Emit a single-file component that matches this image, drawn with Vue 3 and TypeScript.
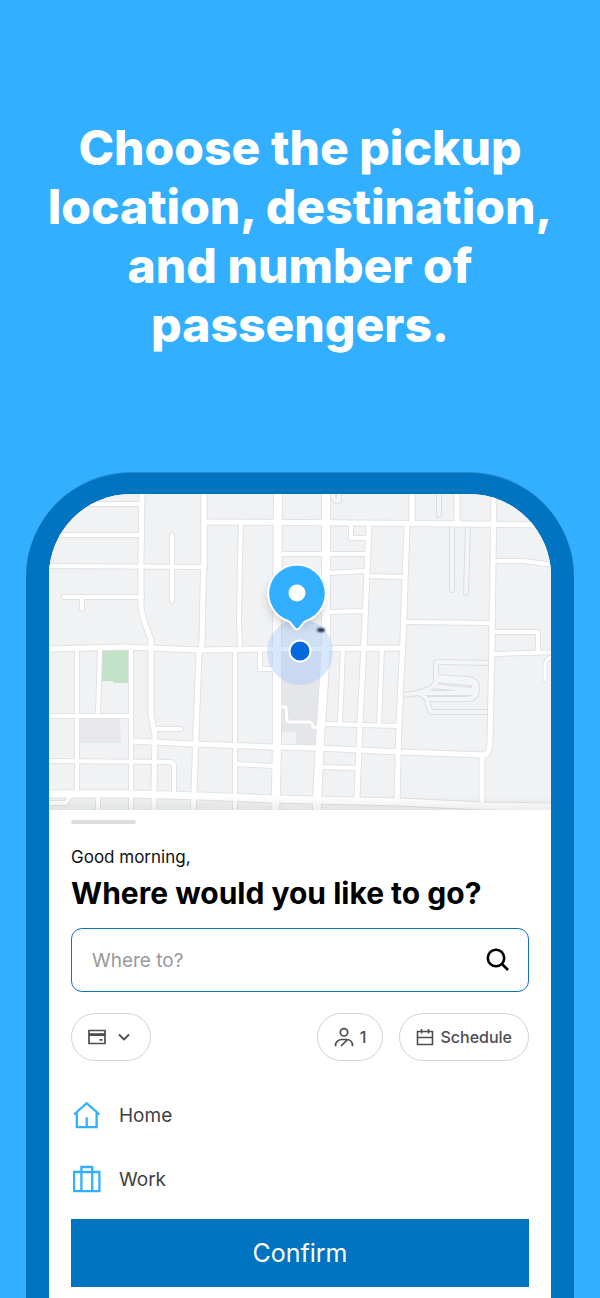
<script setup lang="ts">
import { ref } from 'vue'

interface Road {
  d: string
  w: number
}

const destination = ref('')

const places = [
  { name: 'Home', icon: 'M1 13.5 13.7 2.2 26.5 13.5M3.8 11v15.2h19.8V11M13.7 16.3v9.5' },
  { name: 'Work', icon: 'M1 7h25.4v19.2H1zM8.4 26V2h10.8v24' },
]

const roads: Road[] = [
  { d: 'M90 504H142M49 535H142M49 566 205 567M64 597H142M82 597V609', w: 4 },
  { d: 'M142 490 141 560V607L143 618 151 640V715L155 735 154 790V815', w: 5 },
  { d: 'M172 535V601', w: 4 },
  { d: 'M204 490V560L203 590 202 643 199 653 197 707 194 790 193 815', w: 5 },
  { d: 'M204 522 370 523 555 525', w: 5 },
  { d: 'M241 523 240 560 239 620 240 648M235 650V815', w: 4 },
  { d: 'M280 554H366M328 573 366 571M328 612 365 611', w: 4 },
  { d: 'M369 524 367 573 364 645 360 723 357 799', w: 5 },
  { d: 'M351 525V538H367M368 576 405 577M407 622 491 623', w: 4 },
  { d: 'M407 525 403 640 402 660 399 723 397 802', w: 5 },
  { d: 'M412 490V523M457 490V523', w: 5 },
  { d: 'M494 490 492 640 490 742Q490 755 482 755L482 804', w: 5 },
  { d: 'M493 561H523L555 565M493 632H538V652M493 654 555 652', w: 4 },
  { d: 'M553 657Q545 658 545 667V680', w: 3 },
  { d: 'M49 649 123 647 200 650 277 649 402 648', w: 5 },
  { d: 'M77 648V794M100 648 98 716M131 648V815M49 716H131', w: 4 },
  { d: 'M49 761 170 762Q174 762 174 766V791M157 729H181', w: 4 },
  { d: 'M133 741 193 744 273 747 318 748 400 752 486 755', w: 5 },
  { d: 'M236 764 275 766M260 650V669H276', w: 4 },
  { d: 'M278 707H286L287 720Q287 722 290 722H310Q312 722 313 727L319 728', w: 3 },
  { d: 'M343 648 340 724M382 648 379 724M324 724 399 726M321 767 358 768', w: 4 },
  { d: 'M49 803H66L71 795M98 796V815', w: 4 },
  { d: 'M278 490 277 640V740L276 790 275 815', w: 8 },
  { d: 'M326 490V640L324 680 320 740 317 800V815', w: 8 },
  { d: 'M49 794 133 794 200 796 273 799 400 802 483 806 555 807', w: 7 },
]

const lanes: string[] = [
  'M439 490V515M452 527V590M468 527 466 593',
  'M333 494V497Q335 502 339 501V490',
  'M403 695 412 694Q420 693 433 687L436 682V665Q436 662 439 662L490 663',
  'M420 694Q428 697 428 704L430 710Q430 712 433 712H490',
  'M436 677 468 679Q477 680 477 689 477 699 466 699H430',
  'M434 686 470 690Q474 690 474 688V685Q474 683 470 683L437 680M425 693H474',
]
</script>

<template>
  <main class="page">
    <h1 class="headline">Choose the pickup location, destination, and number of passengers.</h1>

    <section class="phone">
      <div class="screen">
        <svg class="map" viewBox="49 494 502 316" role="img" aria-label="Map with pickup location">
          <defs>
            <filter id="soft" x="-40%" y="-40%" width="180%" height="180%">
              <feGaussianBlur stdDeviation="4" />
            </filter>
            <filter id="smudge" x="-50%" y="-100%" width="200%" height="300%">
              <feGaussianBlur stdDeviation="1" />
            </filter>
            <linearGradient id="edge" x1="0" y1="0" x2="0" y2="1">
              <stop offset="0" stop-color="#555" stop-opacity="0" />
              <stop offset="1" stop-color="#555" stop-opacity="0.1" />
            </linearGradient>
          </defs>
          <rect x="49" y="494" width="502" height="316" fill="#f1f2f3" />
          <path d="M79 719h41l1 24H79z" fill="#e8e8eb" />
          <path d="M281 650h43l-4 95-24-1v-12h-15z" fill="#e5e6ea" />
          <path d="M102 650h27v33h-15l-1-2h-11z" fill="#c3e2c7" />
          <g fill="none" stroke-linecap="round" stroke-linejoin="round">
            <path v-for="lane in lanes" :key="lane" :d="lane" stroke="#dddee0" stroke-width="6" />
            <path v-for="lane in lanes" :key="'f' + lane" :d="lane" stroke="#f4f5f6" stroke-width="4" />
            <path v-for="road in roads" :key="road.d" :d="road.d" stroke="#e1e2e4" :stroke-width="road.w + 2" />
            <path v-for="road in roads" :key="'f' + road.d" :d="road.d" stroke="#fff" :stroke-width="road.w" />
          </g>
          <rect x="49" y="796" width="502" height="14" fill="url(#edge)" />
          <circle cx="300" cy="652" r="33" fill="#9fc9fb" fill-opacity="0.42" />
          <ellipse cx="321" cy="630" rx="4" ry="2" fill="#1c2440" filter="url(#smudge)" />
          <circle cx="296" cy="599" r="29" fill="#000" fill-opacity="0.15" filter="url(#soft)" />
          <path
            d="M297 564.500a29 29 0 0 1 9 56.500Q303.500 622 302 625L299 628.500Q297 630.500 295 628.500L292 625Q290.500 622 288 621A29 29 0 0 1 297 564.500z"
            fill="#33afff"
            stroke="#fff"
            stroke-width="2"
          />
          <circle cx="297" cy="593" r="8.500" fill="#fff" />
          <circle cx="300" cy="651" r="10.500" fill="#0568df" stroke="#fff" stroke-width="2" />
        </svg>

        <div class="sheet">
          <div class="handle"></div>
          <p class="greeting">Good morning,</p>
          <h2 class="question">Where would you like to go?</h2>

          <form class="search" @submit.prevent>
            <input v-model="destination" class="search-input" type="text" placeholder="Where to?" aria-label="Where to?" />
            <button class="search-button" type="submit" aria-label="Search">
              <svg width="24" height="24" viewBox="0 0 24 24" fill="none" stroke="#000" stroke-width="2.6">
                <circle cx="10" cy="10" r="8.200" />
                <path d="m16 16 6 6" />
              </svg>
            </button>
          </form>

          <div class="options">
            <button class="pill payment" type="button" aria-label="Payment method">
              <svg width="18" height="18" viewBox="0 0 18 18" fill="none" stroke="#4c4d52" stroke-width="1.700">
                <path d="M1 2.500h16v13H1zM11.500 11.800h3" />
                <path d="M1 6.600h16" stroke-width="2.800" />
              </svg>
              <svg width="12" height="12" viewBox="0 0 12 12" fill="none" stroke="#4c4d52" stroke-width="1.800">
                <path d="m1 3.500 5 5 5-5" />
              </svg>
            </button>
            <button class="pill" type="button" aria-label="1 passenger">
              <svg width="20" height="20" viewBox="0 0 20 20" fill="none" stroke="#4c4d52" stroke-width="1.700">
                <circle cx="10" cy="5.300" r="3.700" />
                <path d="M1.500 19.300V18.500C1.500 15 4.500 12.500 8 12.500H12.500C16 12.500 18.500 15 18.500 18.300V19.300M13 13.200 7 19" />
              </svg>
              <span>1</span>
            </button>
            <button class="pill" type="button">
              <svg width="18" height="18" viewBox="0 0 18 18" fill="none" stroke="#4c4d52" stroke-width="1.600">
                <path d="M1.500 3.500h15v13h-15zM1.500 9.500h15M5.500 1v4.500M12.500 1v4.500" />
              </svg>
              <span>Schedule</span>
            </button>
          </div>

          <ul class="places">
            <li v-for="place in places" :key="place.name">
              <a class="place" href="#">
                <svg width="28" height="28" viewBox="0 0 28 28" fill="none" stroke="#33afff" stroke-width="2.300">
                  <path :d="place.icon" />
                </svg>
                <span>{{ place.name }}</span>
              </a>
            </li>
          </ul>

          <button class="confirm" type="button">Confirm</button>
        </div>
      </div>
    </section>
  </main>
</template>

<style>
body {
  margin: 0;
  background: #33afff;
}
</style>

<style scoped>
.page,
.page * {
  box-sizing: border-box;
}

.page {
  display: flex;
  flex-direction: column;
  min-height: 100vh;
  overflow: hidden;
  background: #33afff;
  font-family: Inter, "Liberation Sans", sans-serif;
}

.headline {
  margin: 0;
  padding: 118px 32px;
  color: #fff;
  font-size: 48px;
  font-weight: 800;
  line-height: 59px;
  text-align: center;
}

.phone {
  flex: 1;
  margin: 0 26px;
  padding: 21px 23px 0;
  border-top: 1px solid #2989cf;
  border-radius: 105px 105px 0 0;
  background: #0074c0;
}

.screen {
  display: flex;
  flex-direction: column;
  height: 100%;
  overflow: hidden;
  border-radius: 82px 82px 0 0;
  background: #fff;
}

.map {
  display: block;
  width: 100%;
  height: auto;
}

.sheet {
  padding: 10px 22px 11px;
}

.handle {
  width: 65px;
  height: 4px;
  border-radius: 2px;
  background: #ddd;
}

.greeting {
  margin: 23px 0 8px;
  color: #111;
  font-size: 17px;
  line-height: 20px;
}

.question {
  margin: 0;
  color: #000;
  font-size: 30px;
  font-weight: 700;
  line-height: 36px;
}

.search {
  display: flex;
  align-items: center;
  height: 64px;
  margin-top: 17px;
  padding: 0 18px 0 20px;
  border: 1px solid #0f76bd;
  border-radius: 11px;
}

.search-input {
  flex: 1;
  min-width: 0;
  padding: 0;
  border: 0;
  outline: 0;
  background: none;
  color: #111;
  font: inherit;
  font-size: 19px;
}

.search-input::placeholder {
  color: #999;
  opacity: 1;
}

.search-button {
  display: flex;
  padding: 0;
  border: 0;
  background: none;
}

.options {
  display: flex;
  gap: 16px;
  margin-top: 21px;
}

.pill {
  display: flex;
  align-items: center;
  gap: 6px;
  height: 48px;
  padding: 0 16px;
  border: 1px solid #d3d3d3;
  border-radius: 24px;
  background: #fff;
  color: #4c4d52;
  font: inherit;
  font-size: 16px;
  font-weight: 500;
}

.payment {
  gap: 12px;
  margin-right: auto;
  padding-right: 20px;
}

.places {
  margin: 22px 0 8px;
  padding: 0;
  list-style: none;
}

.place {
  display: flex;
  align-items: center;
  gap: 18px;
  height: 64px;
  padding-left: 2px;
  color: #3f3f41;
  font-size: 19px;
  text-decoration: none;
}

.confirm {
  display: block;
  width: 100%;
  height: 68px;
  padding: 0;
  border: 0;
  background: #0074c0;
  color: #fff;
  font: inherit;
  font-size: 25px;
}
</style>
